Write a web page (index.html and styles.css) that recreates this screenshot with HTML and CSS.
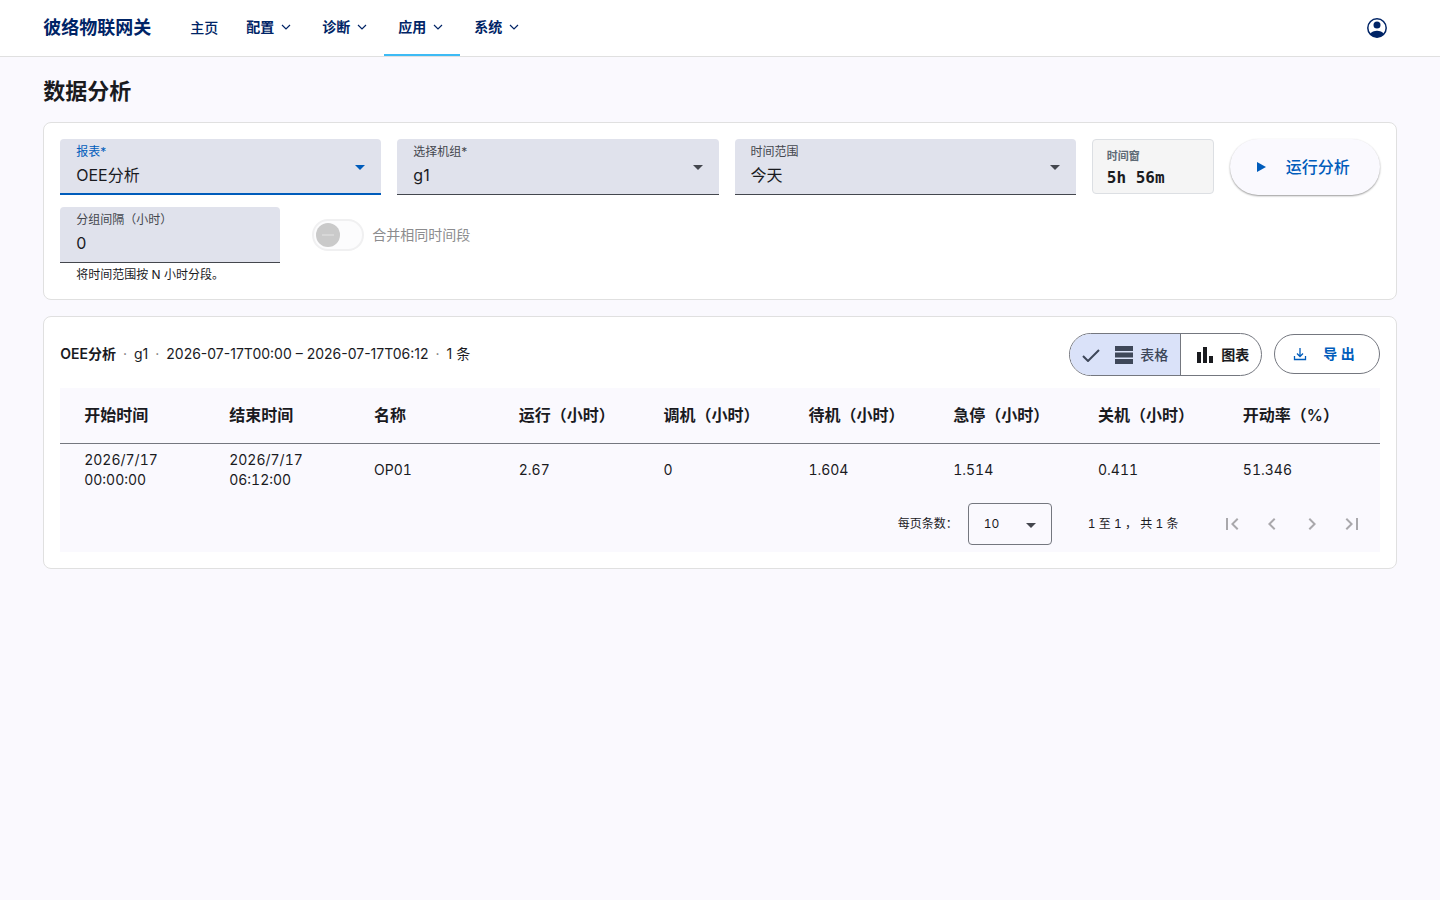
FILE: index.html
```html
<!DOCTYPE html>
<html lang="zh-CN">
<head>
<meta charset="utf-8">
<meta name="viewport" content="width=device-width, initial-scale=1">
<title>数据分析</title>
<link rel="stylesheet" href="styles.css">
</head>
<body>
<header class="topbar">
  <a class="brand" href="#">彼络物联网关</a>
  <nav class="nav">
    <a class="nav-item nav-home" href="#">主页</a>
    <button class="nav-item" type="button">配置<svg class="chevron" viewBox="0 0 12 12"><path d="M2 4l4 4 4-4"/></svg></button>
    <button class="nav-item" type="button">诊断<svg class="chevron" viewBox="0 0 12 12"><path d="M2 4l4 4 4-4"/></svg></button>
    <button class="nav-item active" type="button">应用<svg class="chevron" viewBox="0 0 12 12"><path d="M2 4l4 4 4-4"/></svg></button>
    <button class="nav-item" type="button">系统<svg class="chevron" viewBox="0 0 12 12"><path d="M2 4l4 4 4-4"/></svg></button>
  </nav>
  <button class="account" type="button" aria-label="账户">
    <svg viewBox="0 0 24 24" width="24" height="24"><circle cx="12" cy="12" r="9.200" fill="none" stroke="currentColor" stroke-width="1.500"/><circle cx="12" cy="9" r="3.500" fill="currentColor"/><path fill="currentColor" d="M5 18c1.500-2.300 4.300-3.200 7-3.200s5.500.9 7 3.200c-1.700 2-4.200 3.200-7 3.200S6.700 20 5 18z"/></svg>
  </button>
</header>
<main class="page">
  <h1 class="page-title">数据分析</h1>
  <section class="card">
    <form class="filters">
      <div class="field focused">
        <label for="report">报表*</label>
        <select id="report"><option>OEE分析</option></select>
        <svg class="caret" viewBox="0 0 10 5"><path d="M0 0h10L5 5z"/></svg>
      </div>
      <div class="field">
        <label for="group">选择机组*</label>
        <select id="group"><option>g1</option></select>
        <svg class="caret" viewBox="0 0 10 5"><path d="M0 0h10L5 5z"/></svg>
      </div>
      <div class="field">
        <label for="range">时间范围</label>
        <select id="range"><option>今天</option></select>
        <svg class="caret" viewBox="0 0 10 5"><path d="M0 0h10L5 5z"/></svg>
      </div>
      <div class="window">
        <span class="window-label">时间窗</span>
        <span class="window-value">5h 56m</span>
      </div>
      <button class="run" type="button"><svg viewBox="0 0 9 10" width="9" height="10"><path fill="currentColor" d="M0 0l9 5-9 5z"/></svg>运行分析</button>
    </form>
    <div class="options">
      <div class="interval">
        <div class="field">
          <label for="interval">分组间隔（小时）</label>
          <input id="interval" type="text" value="0">
        </div>
        <p class="hint">将时间范围按 N 小时分段。</p>
      </div>
      <div class="merge">
        <input class="switch" id="merge" type="checkbox" role="switch" disabled>
        <label for="merge">合并相同时间段</label>
      </div>
    </div>
  </section>
  <section class="card">
    <div class="result-head">
      <p class="summary"><strong>OEE分析</strong><i>·</i><span>g1</span><i>·</i><span>2026-07-17T00:00 – 2026-07-17T06:12</span><i>·</i><span>1 条</span></p>
      <div class="view-toggle">
        <button class="view selected" type="button">
          <svg class="check" viewBox="0 0 18 14" width="18" height="14"><path d="M1 8 6 13 17 2" fill="none" stroke="currentColor" stroke-width="2"/></svg>
          <svg viewBox="0 0 18 18" width="18" height="18"><path fill="currentColor" d="M0 0h18v5H0zM0 6.500h18v5H0zM0 13h18v5H0z"/></svg>表格</button>
        <button class="view" type="button"><svg viewBox="0 0 17 16" width="17" height="16"><path fill="currentColor" d="M0 5h4v11H0zM6 0h4v16H6zM12 9h4v7h-4z"/></svg>图表</button>
      </div>
      <button class="export" type="button"><svg viewBox="0 0 14 14" width="14" height="14"><path d="M7 1v8M4 6.500l3 3 3-3M1.500 9v3.500h11V9" fill="none" stroke="currentColor" stroke-width="1.300"/></svg>导 出</button>
    </div>
    <div class="table-wrap">
      <table class="table">
        <colgroup><col class="edge"><col><col><col><col><col><col><col><col class="edge"></colgroup>
        <thead><tr><th>开始时间</th><th>结束时间</th><th>名称</th><th>运行（小时）</th><th>调机（小时）</th><th>待机（小时）</th><th>急停（小时）</th><th>关机（小时）</th><th>开动率（%）</th></tr></thead>
        <tbody><tr><td>2026/7/17<br>00:00:00</td><td>2026/7/17<br>06:12:00</td><td>OP01</td><td>2.67</td><td>0</td><td>1.604</td><td>1.514</td><td>0.411</td><td>51.346</td></tr></tbody>
      </table>
      <div class="paginator">
        <label for="size">每页条数：</label>
        <div class="size">
          <select id="size"><option>10</option></select>
          <svg class="caret" viewBox="0 0 10 5"><path d="M0 0h10L5 5z"/></svg>
        </div>
        <span class="range">1 至 1 ， 共 1 条</span>
        <button type="button" disabled aria-label="第一页"><svg viewBox="0 0 24 24"><path d="M18.410 16.590 13.820 12l4.590-4.590L17 6l-6 6 6 6zM6 6h2v12H6z"/></svg></button>
        <button type="button" disabled aria-label="上一页"><svg viewBox="0 0 24 24"><path d="M15.410 7.410 14 6l-6 6 6 6 1.410-1.410L10.830 12z"/></svg></button>
        <button type="button" disabled aria-label="下一页"><svg viewBox="0 0 24 24"><path d="M10 6 8.590 7.410 13.170 12l-4.580 4.590L10 18l6-6z"/></svg></button>
        <button type="button" disabled aria-label="最后一页"><svg viewBox="0 0 24 24"><path d="M5.590 7.410 10.180 12l-4.590 4.590L7 18l6-6-6-6zM16 6h2v12h-2z"/></svg></button>
      </div>
    </div>
  </section>
</main>
</body>
</html>
```

FILE: styles.css
```css
* { box-sizing: border-box; }
body {
  margin: 0;
  min-height: 100vh;
  background: #faf9fe;
  color: #1a1b1f;
  font: 400 14px/20px Inter, "Noto Sans CJK SC", sans-serif;
}
button, input, select { font: inherit; color: inherit; margin: 0; }
button { border: 0; background: none; padding: 0; }
a { color: inherit; text-decoration: none; }
svg { display: block; flex: none; }

.topbar {
  display: flex;
  align-items: stretch;
  height: 57px;
  padding: 0 3%;
  background: #fff;
  border-bottom: 1px solid #e0e0e0;
  color: #002466;
}
.brand { align-self: center; margin-right: 25px; font-size: 18px; line-height: 24px; font-weight: 700; }
.nav { display: flex; flex: 1; }
.nav-item {
  display: flex;
  align-items: center;
  gap: 6px;
  padding: 0 16px 0 14px;
  border-bottom: 2px solid transparent;
  font-weight: 600;
}
.nav-home { padding: 2px 14px 0; font-weight: 500; }
.nav-item.active { border-bottom-color: #3dbbf5; }
.chevron { width: 12px; height: 12px; fill: none; stroke: currentColor; stroke-width: 1.2; }
.account { width: 40px; display: grid; place-items: center; }

.page { padding: 16px 3%; }
.page-title { margin: 0 0 13px; font-size: 22px; line-height: 36px; font-weight: 600; }
.card {
  margin-bottom: 16px;
  padding: 16px;
  background: #fff;
  border: 1px solid #e0e0e0;
  border-radius: 8px;
}

.filters { display: grid; grid-template-columns: 16fr 16fr 17fr 122px 150px; gap: 16px; align-items: start; }
.field {
  display: grid;
  height: 56px;
  background: #e0e2ec;
  border-bottom: 1px solid #44474e;
  border-radius: 4px 4px 0 0;
  color: #44474e;
}
.field > * { grid-area: 1 / 1; }
.field label { z-index: 1; padding: 4px 16px; font-size: 12px; line-height: 18px; align-self: start; pointer-events: none; }
.field select, .field input {
  width: 100%;
  height: 55px;
  padding: 24px 16px 7px;
  border: 0;
  background: transparent;
  appearance: none;
  outline: 0;
  color: #1a1b1f;
  font-size: 16px;
  line-height: 24px;
}
.field.focused { border-bottom: 2px solid #005cbb; }
.field.focused label, .field.focused .caret { color: #005cbb; }
.caret { width: 10px; height: 5px; fill: currentColor; pointer-events: none; align-self: center; justify-self: end; margin: 2px 16px 0 0; }
.window {
  display: flex;
  flex-direction: column;
  height: 55px;
  padding: 8px 14px 4px;
  border: 1px solid #dcdfe3;
  border-radius: 4px;
  background: #f5f5f5;
}
.window-label { font-size: 11px; line-height: 16px; font-weight: 600; color: #5f6b76; }
.window-value { font: 700 16px/28px "DejaVu Sans Mono", monospace; white-space: pre; }
.run {
  display: flex;
  align-items: center;
  justify-content: center;
  gap: 20px;
  height: 56px;
  padding-right: 3px;
  border-radius: 28px;
  background: #faf9fe;
  color: #005cbb;
  font-size: 16px;
  font-weight: 500;
  box-shadow: 0 1px 2px rgba(0, 0, 0, .4);
}
.options { display: flex; gap: 32px; margin-top: 12px; }
.interval { width: 220px; }
.hint { margin: 4px 0 0; padding: 0 16px; font-size: 12px; line-height: 16px; }
.merge { display: flex; align-items: center; gap: 8px; height: 56px; color: #8c8c8e; }
.switch {
  appearance: none;
  display: flex;
  align-items: center;
  width: 52px;
  height: 32px;
  padding: 0 2px;
  border: 2px solid #f0f0f1;
  border-radius: 16px;
  background: #fcfcfd;
}
.switch::before {
  content: "";
  width: 24px;
  height: 24px;
  border-radius: 50%;
  background: linear-gradient(#d7d7d7, #d7d7d7) center / 12px 2px no-repeat #cacaca;
}

.result-head { display: flex; gap: 12px; align-items: center; margin-bottom: 12px; }
.summary { flex: 1; display: flex; gap: 7px; margin: 0 0 2px; }
.summary strong { font-weight: 600; }
.summary i { font-style: normal; color: #777; }
.view-toggle { display: flex; height: 43px; border: 1px solid #74777f; border-radius: 22px; overflow: hidden; }
.view { display: flex; align-items: center; gap: 7px; padding: 0 12px 0 16px; font-weight: 600; }
.view.selected { padding-left: 12px; background: #dae2f9; color: #3e4759; border-right: 1px solid #74777f; font-weight: 500; }
.check { margin-right: 8px; }
.export {
  display: flex;
  align-items: center;
  gap: 16px;
  height: 40px;
  margin-bottom: 2px;
  padding: 0 24px 0 18px;
  border: 1px solid #74777f;
  border-radius: 20px;
  color: #005cbb;
  font-weight: 600;
}
.table-wrap { background: #faf9fe; font-variant-numeric: tabular-nums; }
.table { width: 100%; table-layout: fixed; border-collapse: separate; border-spacing: 0; }
.table .edge { width: 153px; }
.table th, .table td { padding: 0 0 0 16px; text-align: left; }
.table th:first-child, .table td:first-child { padding-left: 24px; }
.table th { height: 56px; padding-bottom: 2px; border-bottom: 1px solid #74777f; font-size: 16px; line-height: 24px; font-weight: 600; }
.table td { height: 52px; }
.paginator { display: flex; align-items: center; justify-content: flex-end; height: 56px; padding-right: 8px; font-size: 12px; }
.paginator button { display: grid; place-items: center; width: 40px; height: 40px; }
.paginator button svg { width: 24px; height: 24px; fill: #a9a8ac; }
.size { display: grid; width: 84px; height: 42px; margin: 0 36px 0 10px; border: 1px solid #74777f; border-radius: 4px; color: #44474e; }
.size > * { grid-area: 1 / 1; }
.size select { width: 100%; padding: 0 15px; border: 0; background: transparent; appearance: none; color: #1a1b1f; }
.size .caret { margin-right: 15px; }
.range { min-width: 92px; margin-right: 32px; white-space: pre; }
```
